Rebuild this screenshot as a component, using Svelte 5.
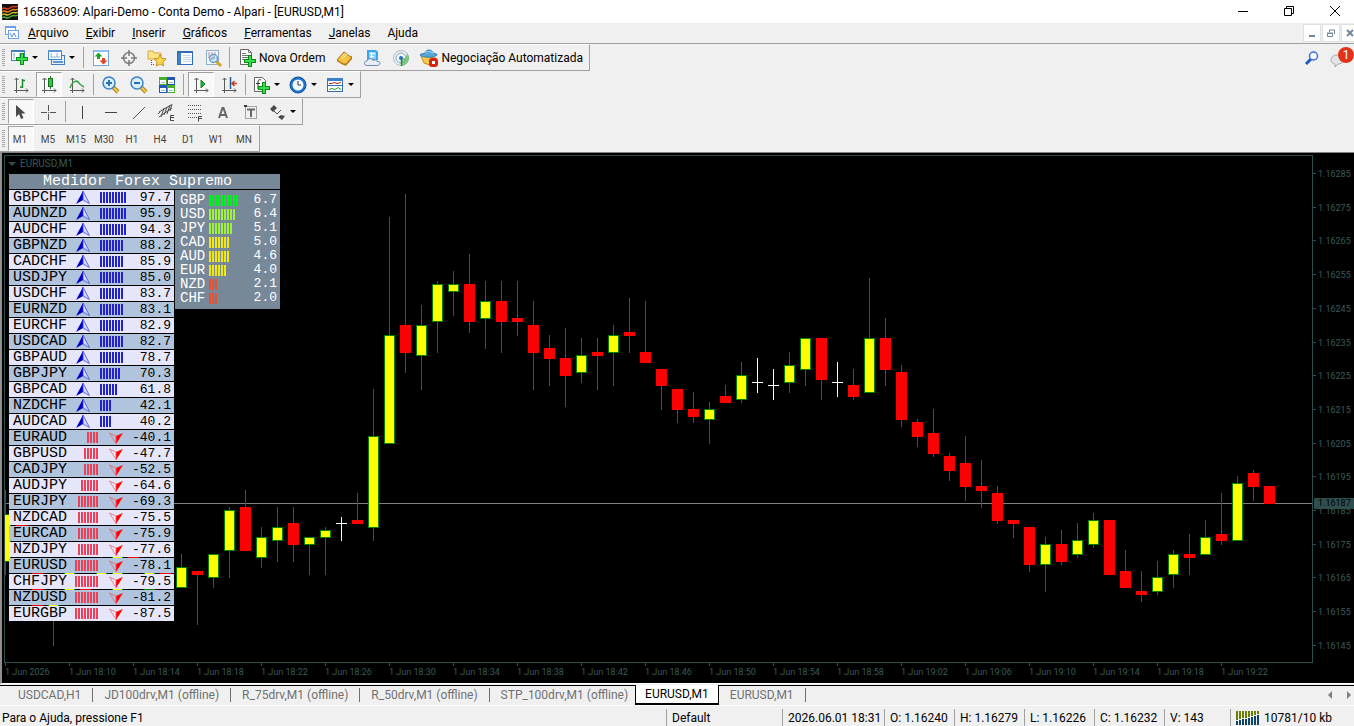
<script lang="ts">
  type Candle = [string, number, number, number, number];
  type Tool = { icon: string; title: string; text?: string; menu?: boolean; active?: boolean };

  const menus = ['Arquivo', 'Exibir', 'Inserir', 'Gráficos', 'Ferramentas', 'Janelas', 'Ajuda'];

  // null is a separator
  const standard: Array<Tool | null> = [
    { icon: 'newchart', title: 'Novo gráfico', menu: true },
    { icon: 'profiles', title: 'Perfis', menu: true },
    null,
    { icon: 'market', title: 'Observação do mercado' },
    { icon: 'target', title: 'Janela de dados' },
    { icon: 'navigator', title: 'Navegador' },
    { icon: 'terminal', title: 'Terminal' },
    { icon: 'tester', title: 'Testador' },
    null,
    { icon: 'order', title: 'Nova ordem', text: 'Nova Ordem' },
    { icon: 'book', title: 'MetaEditor' },
    { icon: 'cloud', title: 'Hospedagem virtual' },
    { icon: 'signal', title: 'Sinais' },
    { icon: 'auto', title: 'Negociação', text: 'Negociação Automatizada' }
  ];
  const charts: Array<Tool | null> = [
    { icon: 'bars', title: 'Barras' },
    { icon: 'candles', title: 'Candles', active: true },
    { icon: 'line', title: 'Linha' },
    null,
    { icon: 'zoomin', title: 'Ampliar' },
    { icon: 'zoomout', title: 'Reduzir' },
    { icon: 'tile', title: 'Lado a lado' },
    null,
    { icon: 'scroll', title: 'Rolagem automática', active: true },
    { icon: 'shift', title: 'Deslocar gráfico' },
    null,
    { icon: 'indicators', title: 'Indicadores', menu: true },
    { icon: 'clock', title: 'Períodos', menu: true },
    { icon: 'template', title: 'Modelos', menu: true }
  ];
  const lines: Array<Tool | null> = [
    { icon: 'cursor', title: 'Cursor', active: true },
    { icon: 'cross', title: 'Mira' },
    null,
    { icon: 'vline', title: 'Linha vertical' },
    { icon: 'hline', title: 'Linha horizontal' },
    { icon: 'trend', title: 'Linha de tendência' },
    { icon: 'channel', title: 'Canal equidistante' },
    { icon: 'fibo', title: 'Retração de Fibonacci' },
    { icon: 'text', title: 'Texto' },
    { icon: 'label', title: 'Etiqueta' },
    { icon: 'arrows', title: 'Setas', menu: true }
  ];
  const toolbars = [standard, charts, lines];
  const periods = ['M1', 'M5', 'M15', 'M30', 'H1', 'H4', 'D1', 'W1', 'MN'];

  // pair, value, number of bars
  const pairs: Array<[string, number, number]> = [
    ['GBPCHF', 97.7, 9], ['AUDNZD', 95.9, 9], ['AUDCHF', 94.3, 9], ['GBPNZD', 88.2, 8],
    ['CADCHF', 85.9, 8], ['USDJPY', 85.0, 8], ['USDCHF', 83.7, 8], ['EURNZD', 83.1, 8],
    ['EURCHF', 82.9, 8], ['USDCAD', 82.7, 8], ['GBPAUD', 78.7, 8], ['GBPJPY', 70.3, 7],
    ['GBPCAD', 61.8, 6], ['NZDCHF', 42.1, 4], ['AUDCAD', 40.2, 4], ['EURAUD', -40.1, 4],
    ['GBPUSD', -47.7, 5], ['CADJPY', -52.5, 5], ['AUDJPY', -64.6, 6], ['EURJPY', -69.3, 7],
    ['NZDCAD', -75.5, 7], ['EURCAD', -75.9, 7], ['NZDJPY', -77.6, 7], ['EURUSD', -78.1, 8],
    ['CHFJPY', -79.5, 8], ['NZDUSD', -81.2, 8], ['EURGBP', -87.5, 8]
  ];
  const strength: Array<[string, string, number, string]> = [
    ['GBP', '6.7', 10, 'lime'], ['USD', '6.4', 9, 'lawn'], ['JPY', '5.1', 8, 'lawn'],
    ['CAD', '5.0', 7, 'gold'], ['AUD', '4.6', 7, 'gold'], ['EUR', '4.0', 6, 'gold'],
    ['NZD', '2.1', 3, 'weak'], ['CHF', '2.0', 3, 'weak']
  ];

  // kind (u = up, d = down, x = doji), high, body top, body bottom, low
  const step = 16;
  const top = 156;
  const candles: Candle[] = [
    ['u', 490, 514, 562, 575], ['d', 515, 520, 540, 545], ['d', 560, 571, 608, 610], ['u', 596, 604, 618, 646],
    ['u', 565, 570, 592, 595], ['d', 583, 586, 592, 596], ['u', 555, 571, 576, 580], ['u', 553, 556, 591, 595],
    ['d', 540, 554, 560, 562], ['u', 560, 571, 590, 594], ['d', 552, 571, 576, 580],
    ['u', 554, 567, 588, 588], ['d', 571, 571, 575, 625], ['u', 554, 554, 578, 588], ['u', 507, 510, 551, 578],
    ['d', 490, 507, 551, 551], ['u', 527, 537, 558, 568], ['u', 507, 527, 541, 562], ['d', 507, 523, 545, 562],
    ['u', 537, 537, 545, 575], ['u', 527, 530, 538, 575], ['x', 517, 523, 524, 541], ['d', 493, 520, 524, 524],
    ['u', 389, 436, 528, 541], ['u', 217, 335, 444, 444], ['d', 194, 325, 353, 373], ['u', 305, 325, 356, 390],
    ['u', 281, 284, 322, 353], ['u', 271, 284, 292, 316], ['d', 254, 284, 322, 333], ['u', 281, 301, 319, 349],
    ['d', 281, 301, 322, 353], ['d', 281, 318, 322, 336], ['d', 301, 325, 353, 390], ['d', 335, 348, 359, 386],
    ['d', 328, 358, 376, 407], ['u', 338, 355, 373, 383], ['d', 338, 352, 356, 390], ['u', 325, 335, 353, 386],
    ['d', 298, 332, 336, 353], ['d', 301, 352, 363, 363], ['d', 369, 369, 386, 410], ['d', 389, 389, 410, 423],
    ['d', 392, 409, 417, 423], ['u', 402, 409, 420, 444], ['d', 385, 396, 403, 403], ['u', 362, 375, 400, 403],
    ['x', 358, 382, 383, 393], ['x', 369, 385, 386, 400], ['u', 352, 365, 383, 393], ['u', 338, 338, 370, 386],
    ['d', 338, 338, 380, 400], ['x', 362, 382, 383, 397], ['d', 369, 385, 397, 400], ['u', 278, 338, 393, 393],
    ['d', 318, 338, 370, 386], ['d', 365, 372, 420, 427], ['d', 419, 422, 437, 447], ['d', 409, 433, 454, 457],
    ['d', 453, 456, 471, 481], ['d', 436, 463, 487, 501], ['d', 460, 486, 491, 508], ['d', 486, 493, 521, 524],
    ['d', 520, 520, 524, 538], ['d', 527, 527, 565, 572], ['u', 537, 544, 565, 592], ['d', 530, 544, 562, 565],
    ['u', 523, 540, 555, 558], ['u', 513, 520, 545, 548], ['d', 520, 520, 575, 575], ['d', 550, 571, 588, 588],
    ['d', 571, 591, 595, 602], ['u', 561, 577, 592, 595], ['u', 550, 554, 575, 588], ['d', 534, 554, 558, 575],
    ['u', 520, 537, 555, 555], ['d', 493, 534, 541, 545], ['u', 476, 483, 541, 541], ['d', 470, 473, 487, 501],
    ['d', 486, 486, 504, 504]
  ];

  const prices = Array.from({ length: 15 }, (_, i) => (1.16285 - i * 0.0001).toFixed(5));
  const times = Array.from({ length: 20 }, (_, i) => {
    if (i === 0) return '1 Jun 2026';
    const m = 6 + i * 4;
    return `1 Jun ${18 + Math.floor(m / 60)}:${String(m % 60).padStart(2, '0')}`;
  });

  const tabs = [
    'USDCAD,H1', 'JD100drv,M1 (offline)', 'R_75drv,M1 (offline)', 'R_50drv,M1 (offline)',
    'STP_100drv,M1 (offline)', 'EURUSD,M1', 'EURUSD,M1'
  ];
  let activeTab = $state(5);
  let activePeriod = $state('M1');
</script>

{#snippet plus(x: number, y: number)}
  <path transform="translate({x} {y})" d="M4 0h4v4h4v4H8v4H4V8H0V4h4z" fill="#0a8a16" />
  <path transform="translate({x} {y})" d="M5 1h2v4h4v2H7v4H5V7H1V5h4z" fill="#35e04a" />
{/snippet}

{#snippet axes()}
  <path d="M5.500 3v15M3.500 5l2-2 2 2M3 15.500h14M15 13.500l2 2-2 2" fill="none" stroke="#5a5a5a" />
{/snippet}

{#snippet icon(name: string)}
  <svg class="icon" width="20" height="20" viewBox="0 0 20 20" aria-hidden="true">
    {#if name === 'newchart'}
      <rect x="2.5" y="2.5" width="13" height="10" fill="#fff" stroke="#3f7fc4" />
      <path d="M2 3h14" stroke="#3f7fc4" stroke-width="2" />
      <path d="M5 5v6M4 6h2M11 5v5M10 7h4" stroke="#8ab0d8" />
      {@render plus(7, 5)}
    {:else if name === 'profiles'}
      <rect x="5.5" y="7.5" width="13" height="9" fill="#e8f2fc" stroke="#3f7fc4" />
      <rect x="2.5" y="2.5" width="13" height="9" fill="#fff" stroke="#3f7fc4" />
      <path d="M2 3h14M7 14h10" stroke="#5b95d2" stroke-width="2" />
      <path d="M5 5v5M5 9h9M11 5v4" stroke="#8ab0d8" />
    {:else if name === 'market'}
      <rect x="2.5" y="2.5" width="15" height="15" fill="#fff" stroke="#6ea6e0" />
      <path d="M3 3h14" stroke="#8cc0f4" stroke-width="2" />
      <path d="M7.500 4.500l4 4H9v2.500H6V8.500H3.500z" fill="#1fa32b" />
      <path d="M12.500 16.500l-4-4H11V10h3v2.500h2.500z" fill="#e8431f" />
    {:else if name === 'target'}
      <circle cx="10" cy="10" r="5.500" fill="none" stroke="#808080" stroke-width="1.500" />
      <path d="M10 2v6M10 12v6M2 10h6M12 10h6" stroke="#777" stroke-width="1.500" />
    {:else if name === 'navigator'}
      <path d="M1 3h5l1 2h7v6H1z" fill="#fbe48a" stroke="#d8a93c" />
      <path d="M4.500 12v5M4 16.500h4" stroke="#555" stroke-dasharray="1 1" />
      <path d="M13 6.500l1.800 3.900 4.200.5-3.100 2.900.8 4.200-3.700-2.100-3.700 2.100.8-4.200L7 10.900l4.200-.5z" fill="#ffd84d" stroke="#c98f1c" />
    {:else if name === 'terminal'}
      <rect x="2.500" y="3.500" width="15" height="13" fill="#fff" stroke="#2f6cb4" />
      <path d="M3 4h14" stroke="#2f6cb4" stroke-width="2" />
      <rect x="3" y="5" width="3" height="11" fill="#3f82cc" />
      <path d="M8 7.500h8M8 9.500h8M8 11.500h8M8 13.500h8" stroke="#c2d6ec" />
    {:else if name === 'tester'}
      <rect x="3.500" y="2.500" width="12" height="14" fill="#f4f9ff" stroke="#93aec9" />
      <path d="M6 4v6M9 4v3M12 4v3" stroke="#b88" />
      <path d="M13.500 13.500L18 18" stroke="#d9a520" stroke-width="3" />
      <circle cx="10.500" cy="10.500" r="4" fill="#cfe6fa" stroke="#6e9cc9" stroke-width="1.500" />
      <path d="M9 9v3M11 8v3" stroke="#6e8cae" />
    {:else if name === 'order'}
      <path d="M3.500 1.500h8l3 3v12h-11z" fill="#fff" stroke="#666" />
      <path d="M11.500 1.500v3h3M5 5.500h4M5 7.500h7M5 9.500h6M5 11.500h4" fill="none" stroke="#777" />
      {@render plus(7, 7)}
    {:else if name === 'book'}
      <path d="M2 12l7-8c2 1 4 4 8 5l-6 8c-3 0-6-3-9-5z" fill="#f5c443" stroke="#a86c10" />
      <path d="M2 12c3 1 6 4 9 3.500l6-6.500v2l-6 6.500c-3 0-6-3-9-4z" fill="#b77a16" />
      <path d="M6 9l4-4M7 11l5-5" stroke="#ffe9a6" />
    {:else if name === 'cloud'}
      <path d="M4 2h9l2 2v8H4z" fill="#3aa6f0" />
      <path d="M6 4h7v7H6z" fill="#8ad2fb" />
      <path d="M7 5.500h5M7 8.500h4M8.500 4v6" stroke="#fff" />
      <path d="M4 17.500c-3.500 0-3.500-4.500 0-4.500 1-3 5-3 6-.5 2-1.500 4-.5 4 1 4-.5 4 4 0 4z" fill="#e8eef8" stroke="#6d87b3" />
    {:else if name === 'signal'}
      <circle cx="10" cy="10" r="7.500" fill="#edf3f6" stroke="#a9bfce" />
      <circle cx="10" cy="10" r="5" fill="none" stroke="#86a5bd" />
      <path d="M10 10l1 8c4-1 7-4 7-8 0-2-1-4-2-5 0 4-2 6-6 5z" fill="#62bb62" opacity=".75" />
      <path d="M10.500 11v7" stroke="#2f8f38" stroke-width="1.500" />
      <circle cx="10" cy="10" r="2" fill="#2b6fae" />
    {:else if name === 'auto'}
      <path d="M2 8l3 7 8 3 4-8z" fill="#f4cb45" stroke="#bf8f1c" />
      <path d="M1 7c1-2 4-1 5-2 1-4 7-4 8 0 1 1 4 0 4 2-4 3-13 3-17 0z" fill="#58a6dc" stroke="#3480b8" />
      <path d="M6 5c2-2 5-2 8 0" fill="none" stroke="#a8dcf8" />
      <rect x="10" y="10" width="9" height="9" rx="3" fill="#d82414" />
      <rect x="13" y="13" width="3" height="3" fill="#fff" />
    {:else if name === 'bars'}
      {@render axes()}
      <path d="M11.500 4v9M9 12h2M12 5.500h2" stroke="#1c8c2c" stroke-width="1.500" />
    {:else if name === 'candles'}
      {@render axes()}
      <path d="M11.500 1v13" stroke="#14731f" />
      <rect x="9.500" y="3.500" width="4" height="8" fill="#2fc747" stroke="#14731f" />
    {:else if name === 'line'}
      {@render axes()}
      <path d="M3 13c3-8 7-8 9-5 1 2 3 3 5 4" fill="none" stroke="#32a542" stroke-width="1.500" />
    {:else if name === 'zoomin' || name === 'zoomout'}
      <path d="M12 12l5 5" stroke="#a87f14" stroke-width="4" />
      <path d="M12 12l5 5" stroke="#f1cd51" stroke-width="2" />
      <circle cx="8" cy="8" r="6" fill="#d7efff" stroke="#3b82c9" stroke-width="1.500" />
      <path d="M5 8h6" stroke="#2b6fb0" stroke-width="2" />
      {#if name === 'zoomin'}<path d="M8 5v6" stroke="#2b6fb0" stroke-width="2" />{/if}
    {:else if name === 'tile'}
      <rect x="2" y="2" width="8" height="8" fill="#4caf2c" />
      <rect x="10" y="2" width="8" height="8" fill="#2456b8" />
      <rect x="2" y="10" width="8" height="8" fill="#2456b8" />
      <rect x="10" y="10" width="8" height="8" fill="#4caf2c" />
      <path d="M3 5h6v4H3zM11 5h6v4h-6zM3 13h6v4H3zM11 13h6v4h-6z" fill="#fff" />
      <path d="M4 7.500h4M12 7.500h4M4 15.500h4M12 15.500h4" stroke="#9cc0dc" />
    {:else if name === 'scroll'}
      {@render axes()}
      <path d="M10 5l4 4-4 4z" fill="#27b53c" stroke="#15852a" />
    {:else if name === 'shift'}
      {@render axes()}
      <path d="M11.500 2v12" stroke="#1c5f96" stroke-width="1.500" />
      <path d="M18 8.500h-5M15.500 6L13 8.500l2.500 2.500" fill="none" stroke="#c63c1a" stroke-width="1.500" />
    {:else if name === 'indicators'}
      <path d="M3.500 2.500h8l3 3v11h-11z" fill="#fff" stroke="#666" />
      <path d="M10 5c-2-1-3 0-3 2v7M5 8.500h4" fill="none" stroke="#333" />
      {@render plus(7, 7)}
    {:else if name === 'clock'}
      <circle cx="10" cy="10" r="8" fill="#1e74d0" stroke="#14508f" />
      <circle cx="10" cy="10" r="5.500" fill="#f2f8ff" />
      <path d="M10 6v4h3" fill="none" stroke="#333" />
    {:else if name === 'template'}
      <rect x="2.500" y="3.500" width="15" height="13" fill="#fff" stroke="#2f6cb4" />
      <path d="M2 4.500h16" stroke="#3b7fcb" stroke-width="3" />
      <path d="M3 10.500h14" stroke="#2f6cb4" />
      <path d="M4 8.500h3l2-1 3 1 4-1" fill="none" stroke="#a82b1c" />
      <path d="M4 14.500l3-1 3 1 3-2 3 2" fill="none" stroke="#2c9a3b" />
    {:else if name === 'cursor'}
      <path d="M5 3v12l3-3 2 5 2.500-1-2-4.500h4z" fill="#4a4a4a" />
    {:else if name === 'cross'}
      <path d="M9.500 3v6M9.500 12v6M2 10.500h6M11 10.500h6M9 10.500h1" stroke="#555" />
    {:else if name === 'vline'}
      <path d="M9.500 4v13" stroke="#444" />
    {:else if name === 'hline'}
      <path d="M4 10.500h12" stroke="#444" />
    {:else if name === 'trend'}
      <path d="M4 17L16 5" stroke="#555" />
    {:else if name === 'channel'}
      <path d="M2 10L14 3M2 15L15 6M4 15l3-9M7 13l3-8M10 12l3-9M13 9l2-7M1 12l2-2" stroke="#4a4a4a" />
      <path d="M17 13.500h-3.500v5H17M14 15.500h3" fill="none" stroke="#444" />
    {:else if name === 'fibo'}
      <path d="M3 3.500h14M3 7.500h14M3 11.500h14M3 15.500h9" stroke="#555" stroke-dasharray="1 1" />
      <path d="M17 14.500h-3.500v5M14 16.500h3" fill="none" stroke="#444" />
    {:else if name === 'text'}
      <path d="M6 16L9.500 6h1L14 16M7.500 13h5" fill="none" stroke="#666" stroke-width="2" />
    {:else if name === 'label'}
      <rect x="4.500" y="4.500" width="11" height="12" fill="none" stroke="#555" stroke-dasharray="1 1" />
      <path d="M6 7.500h8M10 7v8" stroke="#666" stroke-width="2" />
      <rect x="3" y="3" width="3" height="2" fill="#333" />
    {:else if name === 'arrows'}
      <path d="M3 7l4-4 3 3-4 4zM11 15l3-2 4 1-3 4z" fill="#4a4a4a" />
      <path d="M7 9l3 3 4-4" fill="none" stroke="#4a4a4a" />
    {/if}
  </svg>
{/snippet}

<div class="terminal">
  <header class="titlebar">
    <svg width="16" height="16" viewBox="0 0 16 16" aria-hidden="true">
      <rect width="16" height="16" fill="#111" />
      <path d="M0 5c3-3 4 2 8-1s5 0 8-2" fill="none" stroke="#e23a1c" stroke-width="1.500" />
      <path d="M0 8c3-3 4 2 8-1s5 0 8-2" fill="none" stroke="#f0801e" stroke-width="1.500" />
      <path d="M0 11c3-3 4 2 8-1s5 0 8-2" fill="none" stroke="#c4c42a" stroke-width="1.500" />
      <path d="M0 14c3-3 4 2 8-1s5 0 8-2" fill="none" stroke="#4fb02c" stroke-width="1.500" />
    </svg>
    <h1>16583609: Alpari-Demo - Conta Demo - Alpari - [EURUSD,M1]</h1>
    <div class="window-buttons">
      <button aria-label="Minimizar"><svg width="12" height="12"><path d="M1 6.500h10" stroke="#000" /></svg></button>
      <button aria-label="Restaurar"><svg width="12" height="12"><path d="M1.500 3.500h7v7h-7zM3.500 3V1.500h7v7H9" fill="none" stroke="#000" /></svg></button>
      <button aria-label="Fechar"><svg width="12" height="12"><path d="M1 1l10 10M11 1L1 11" stroke="#000" /></svg></button>
    </div>
  </header>

  <nav class="menubar">
    <svg width="16" height="16" viewBox="0 0 16 16" aria-hidden="true">
      <rect x="1.500" y="1.500" width="10" height="8" fill="#fff" stroke="#6ea0e8" />
      <path d="M1 2h11" stroke="#6ea0e8" stroke-width="2" />
      <rect x="4.500" y="5.500" width="10" height="8" fill="#fff" stroke="#6ea0e8" />
      <path d="M6 8l2 4 2-4 2 4" fill="none" stroke="#5890e0" />
    </svg>
    {#each menus as menu, i}
      <button class="menu">{#if i < 6}<u>{menu[0]}</u>{menu.slice(1)}{:else}{menu}{/if}</button>
    {/each}
    <div class="mdi-buttons">
      <button aria-label="Minimizar gráfico"><svg width="10" height="10"><path d="M2 8h6" stroke="#73879a" stroke-width="2" /></svg></button>
      <button aria-label="Restaurar gráfico"><svg width="10" height="10"><path d="M1.500 5.500h5v3h-5zM1 5h6M3 2h6M8.500 2v4M3.500 2v2" fill="none" stroke="#73879a" /></svg></button>
      <button aria-label="Fechar gráfico"><svg width="10" height="10"><path d="M2 2l6 6M8 2L2 8" stroke="#73879a" stroke-width="2" /></svg></button>
    </div>
  </nav>

  {#each toolbars as tools, row}
    <div class="toolbar-row">
      <div class="toolbar">
        <span class="grip"></span>
        {#each tools as tool}
          {#if tool === null}
            <span class="separator"></span>
          {:else}
            <button class="tool" class:active={tool.active} class:drop={tool.menu} class:labelled={tool.text} title={tool.title}>
              {@render icon(tool.icon)}
              {#if tool.text}<span>{tool.text}</span>{/if}
              {#if tool.menu}<i class="caret"></i>{/if}
            </button>
          {/if}
        {/each}
      </div>
      {#if row === 0}
        <div class="right-tools">
          <button aria-label="Procurar">
            <svg width="16" height="16" viewBox="0 0 16 16">
              <path d="M2 14l5-5" stroke="#2458c8" stroke-width="3" />
              <circle cx="9.500" cy="6" r="4" fill="#f4f9ff" stroke="#3a70dc" stroke-width="1.500" />
            </svg>
          </button>
          <button class="chat" aria-label="Mensagens">
            <svg width="16" height="16" viewBox="0 0 16 16">
              <path d="M7 2c8 0 8 9 1 9l-3 3v-3c-6-1-5-9 2-9z" fill="#e2e4ea" stroke="#a8a8ae" />
            </svg>
            <span class="badge">1</span>
          </button>
        </div>
      {/if}
    </div>
  {/each}

  <div class="toolbar-row">
    <div class="toolbar">
      <span class="grip"></span>
      {#each periods as period}
        <button class="tool period" class:active={period === activePeriod} onclick={() => (activePeriod = period)}>{period}</button>
      {/each}
    </div>
  </div>

  <main class="chart">
    <div class="plot">
      <svg class="series" role="img" aria-label="Gráfico de candles EURUSD,M1">
        <rect x="0" y={503 - top} width="100%" height="1" fill="#808080" />
        {#each candles as [kind, high, open, close, low], i}
          <g class={kind}>
            <rect class="wick" x={i * step} y={high - top} width="1" height={low - high} />
            <rect class="edge" x={i * step - 5} y={open - top} width="11" height={close - open} />
            {#if kind === 'u'}
              <rect class="fill" x={i * step - 4} y={open - top + 1} width="9" height={close - open - 2} />
            {/if}
          </g>
        {/each}
      </svg>
      <div class="symbol"><i></i>EURUSD,M1</div>

      <section class="meter">
        <h2>Medidor Forex Supremo</h2>
        <div class="meter-body">
          <ul class="pairs">
            {#each pairs as [name, value, bars]}
              <li>
                <span class="name">{name}</span>
                <span class="gauge" class:down={value < 0}>
                  <svg width="14" height="13" viewBox="0 0 14 13">
                    {#if value > 0}
                      <path d="M7 0v9L0 13z" fill="#0000c8" />
                      <path d="M7 0v9l6.500 3.500z" fill="#c8d8ff" stroke="#3c3ccc" stroke-width=".7" />
                    {:else}
                      <path d="M7 5v8l7-11z" fill="#f00" />
                      <path d="M7 5v7.500L.5 2z" fill="none" stroke="#ee5566" stroke-width=".7" />
                    {/if}
                  </svg>
                  <span class="bars" style="width: {bars * 3 - 1}px"></span>
                </span>
                <span class="value">{value.toFixed(1)}</span>
              </li>
            {/each}
          </ul>
          <ul class="strength">
            {#each strength as [name, value, bars, tone]}
              <li>
                <span class="name">{name}</span>
                <span class="bars {tone}" style="width: {bars * 3 - 1}px"></span>
                <span class="value">{value}</span>
              </li>
            {/each}
          </ul>
        </div>
      </section>
    </div>

    <div class="prices">
      {#each prices as price}<span>{price}</span>{/each}
      <b class="last">1.16187</b>
    </div>
    <div class="times">
      {#each times as time}<span>{time}</span>{/each}
    </div>
  </main>

  <div class="tabs">
    {#each tabs as tab, i}
      <button class="tab" class:active={i === activeTab} class:before={i === activeTab - 1} onclick={() => (activeTab = i)}>{tab}</button>
    {/each}
    <span class="pager"><i class="prev"></i><i class="next"></i></span>
  </div>

  <footer class="status">
    <span class="help">Para o Ajuda, pressione F1</span>
    <span class="profile">Default</span>
    <span class="date">2026.06.01 18:31</span>
    <span class="quote">O: 1.16240</span>
    <span class="quote">H: 1.16279</span>
    <span class="quote">L: 1.16226</span>
    <span class="quote">C: 1.16232</span>
    <span class="volume">V: 143</span>
    <span class="traffic">
      <svg width="24" height="14" viewBox="0 0 24 14" aria-hidden="true">
        {#each [9, 8, 7, 7, 6, 5, 4, 3] as h, i}
          <rect x={i * 3} y="0" width="2" height={h} fill="#6b8000" />
          <rect x={i * 3} y={h + 1} width="2" height={13 - h} fill="#0f4468" />
        {/each}
      </svg>
      10781/10 kb
    </span>
  </footer>
</div>

<style>
  :global(body) {
    margin: 0;
    overflow: hidden;
  }

  .terminal {
    display: flex;
    flex-direction: column;
    height: 100vh;
    background: #f0f0f0;
    color: #000;
    font: 12px/16px Roboto, 'Open Sans', sans-serif;
  }

  button {
    padding: 0;
    border: 0;
    background: none;
    color: inherit;
    font: inherit;
    white-space: nowrap;
  }

  .titlebar {
    display: flex;
    flex: none;
    align-items: center;
    height: 23px;
    padding-left: 2px;
    background: #fff;
    overflow: hidden;
  }

  .titlebar h1 {
    margin: 0 0 0 5px;
    font: inherit;
    white-space: nowrap;
  }

  .window-buttons {
    display: flex;
    margin: 0 -4px 2px auto;
  }

  .window-buttons button {
    width: 46px;
    height: 20px;
  }

  .window-buttons svg {
    display: block;
    margin: 0 auto;
  }

  .menubar {
    display: flex;
    flex: none;
    align-items: center;
    height: 20px;
    padding-left: 4px;
    border-bottom: 1px solid #a0a0a0;
    overflow: hidden;
  }

  .menu {
    padding: 0 8px 0 9px;
  }

  .menu:first-of-type {
    padding-left: 8px;
  }

  .mdi-buttons {
    display: flex;
    gap: 1px;
    margin: 0 -5px 0 auto;
  }

  .mdi-buttons button {
    width: 18px;
    height: 18px;
    border: 1px solid #e0e0e0;
    background: #fff;
  }

  .mdi-buttons svg {
    display: block;
    margin: 0 auto;
  }

  .toolbar-row {
    display: flex;
    flex: none;
    height: 27px;
  }

  .toolbar {
    display: flex;
    box-sizing: border-box;
    height: 27px;
    border-top: 1px solid #fff;
    border-right: 1px solid #a0a0a0;
    border-bottom: 1px solid #a0a0a0;
  }

  .grip {
    width: 3px;
    margin: 4px 2px;
    background: repeating-linear-gradient(#a8a8a8 0 1px, #f0f0f0 1px 2px);
  }

  .separator {
    width: 1px;
    margin: 2px 3px 2px 2px;
    background: #a0a0a0;
  }

  .tool {
    display: flex;
    box-sizing: border-box;
    align-items: center;
    justify-content: center;
    width: 28px;
    height: 25px;
  }

  .tool.active {
    width: 26px;
    margin: 0 1px;
    border: 1px solid #fff;
    border-top-color: #a0a0a0;
    border-left-color: #a0a0a0;
    background: #f8f8f8;
  }

  .tool.drop {
    justify-content: flex-start;
    gap: 3px;
    width: 37px;
    padding-left: 2px;
  }

  .tool.labelled {
    width: auto;
    padding: 0 6px 0 4px;
    gap: 2px;
  }

  .tool.period {
    padding: 2px 2px 0 0;
    color: #444;
    font-size: 10px;
  }

  .icon {
    flex: none;
  }

  .caret {
    border: 3px solid transparent;
    border-top-color: #000;
    border-bottom: 0;
  }

  .right-tools {
    display: flex;
    align-items: center;
    gap: 10px;
    margin-left: auto;
  }

  .right-tools svg {
    display: block;
  }

  .chat {
    position: relative;
    width: 24px;
    padding-top: 6px;
  }

  .badge {
    position: absolute;
    top: 0;
    right: 0;
    width: 16px;
    height: 16px;
    border-radius: 8px;
    background: #e2331a;
    color: #fff;
    text-align: center;
  }

  .chart {
    display: grid;
    flex: 1;
    grid-template: minmax(0, 1fr) 20px / minmax(0, 1fr) 41px;
    min-height: 0;
    padding: 2px 0 0 2px;
    border-top: 1px solid #808080;
    border-left: 2px solid #909090;
    border-bottom: 1px solid #fff;
    background: #000;
    color: #385c5c;
    font: 9px/12px Roboto, 'Noto Sans', sans-serif;
    overflow: hidden;
  }

  .plot {
    position: relative;
    border: 1px solid #2f4f4f;
  }

  .series {
    display: block;
    width: 100%;
    height: 100%;
    shape-rendering: crispEdges;
  }

  .u .wick,
  .u .edge {
    fill: #008000;
  }

  .u .fill {
    fill: #ff0;
  }

  .d .wick,
  .d .edge {
    fill: #f00;
  }

  .x .wick,
  .x .edge {
    fill: #fff;
  }

  .symbol {
    position: absolute;
    top: 2px;
    left: 3px;
    display: flex;
    align-items: center;
    gap: 4px;
    font-size: 10px;
  }

  .symbol i {
    border: 4px solid transparent;
    border-top-color: #2f4f4f;
    border-bottom: 0;
  }

  .meter {
    position: absolute;
    top: 18px;
    left: 4px;
    width: 271px;
    font-family: 'Courier New', 'Liberation Mono', monospace;
  }

  .meter h2 {
    margin: 0 0 1px;
    padding-right: 14px;
    background: #778899;
    color: #fff;
    font: 15px/15px 'Courier New', 'Liberation Mono', monospace;
    text-align: center;
  }

  .meter-body {
    display: flex;
    align-items: flex-start;
    gap: 1px;
  }

  .meter ul {
    margin: 0;
    padding: 0;
    list-style: none;
  }

  .meter li {
    display: flex;
    align-items: center;
  }

  .name {
    flex: none;
    font-size: 15px;
  }

  .value {
    margin-left: auto;
    font-size: 13px;
  }

  .pairs {
    width: 165px;
    color: #000;
  }

  .pairs li {
    box-sizing: border-box;
    height: 15px;
    margin-bottom: 1px;
    padding: 0 3px 0 4px;
    background: #e6e6fa;
    line-height: 15px;
  }

  .pairs li:nth-child(even) {
    background: #b0c4de;
  }

  .gauge {
    display: flex;
    align-items: center;
    gap: 10px;
    margin-left: 9px;
  }

  .gauge svg {
    flex: none;
  }

  .gauge.down {
    flex-direction: row-reverse;
    gap: 11px;
    width: 56px;
    margin-left: 0;
    justify-content: flex-start;
  }

  .bars {
    flex: none;
    height: 11px;
    background: repeating-linear-gradient(90deg, #2222d0 0 2px, transparent 2px 3px);
  }

  .down .bars {
    background: repeating-linear-gradient(90deg, #f04058 0 2px, transparent 2px 3px);
  }

  .strength {
    flex: 1;
    background: #778899;
    color: #fff;
  }

  .meter .strength {
    padding: 3px 3px 4px 5px;
  }

  .strength li {
    height: 14px;
    line-height: 14px;
  }

  .strength .name {
    width: 29px;
    font-size: 14px;
  }

  .bars.lime {
    background: repeating-linear-gradient(90deg, #00f020 0 2px, transparent 2px 3px);
  }

  .bars.lawn {
    background: repeating-linear-gradient(90deg, #a0f040 0 2px, transparent 2px 3px);
  }

  .bars.gold {
    background: repeating-linear-gradient(90deg, #f0e810 0 2px, transparent 2px 3px);
  }

  .bars.weak {
    background: repeating-linear-gradient(90deg, #e85030 0 2px, transparent 2px 3px);
  }

  .prices {
    position: relative;
    display: flex;
    flex-direction: column;
    justify-content: space-between;
    padding: 13px 0 11px;
  }

  .prices span::before {
    display: inline-block;
    width: 3px;
    height: 1px;
    margin-right: 2px;
    background: #2f4f4f;
    content: '';
    vertical-align: 3px;
  }

  .last {
    position: absolute;
    top: 343px;
    right: 0;
    left: 1px;
    padding-left: 4px;
    background: #2f4f4f;
    color: #000;
    font-weight: normal;
    line-height: 11px;
  }

  .times {
    display: flex;
    grid-column: 1 / -1;
    padding-left: 1px;
    overflow: hidden;
  }

  .times span {
    flex: 0 0 64px;
    white-space: nowrap;
  }

  .times span::before {
    display: block;
    width: 1px;
    height: 3px;
    background: #2f4f4f;
    content: '';
  }

  .tabs {
    display: flex;
    flex: none;
    height: 19px;
    margin-top: 1px;
    padding-left: 7px;
    border-top: 1px solid #000;
    border-bottom: 1px solid #fff;
    color: #707070;
  }

  .tab {
    position: relative;
    padding: 0 12px 2px 11px;
  }

  .tab::after {
    position: absolute;
    top: 2px;
    right: 0;
    width: 1px;
    height: 14px;
    background: #707070;
    content: '';
  }

  .tab.before {
    padding-right: 7px;
  }

  .tab.before::after,
  .tab.active::after {
    content: none;
  }

  .tab.active {
    height: 20px;
    margin-top: -1px;
    padding: 0 9px;
    border: 1px solid #000;
    border-width: 0 1px 2px;
    background: #fff;
    color: #000;
  }

  .pager {
    display: flex;
    align-items: center;
    gap: 15px;
    margin: 0 3px 2px auto;
  }

  .prev,
  .next {
    border-top: 4px solid transparent;
    border-bottom: 4px solid transparent;
  }

  .prev {
    border-right: 4px solid #808080;
  }

  .next {
    border-left: 4px solid #808080;
  }

  .status {
    display: flex;
    flex: none;
    box-sizing: border-box;
    height: 20px;
    padding: 3px 0 0 2px;
    line-height: 18px;
    overflow: hidden;
  }

  .status span {
    flex: none;
    box-sizing: border-box;
    padding-left: 5px;
    border-left: 1px solid #a0a0a0;
    white-space: nowrap;
  }

  .status .help {
    flex: 1;
    padding: 0;
    border: 0;
  }

  .profile {
    width: 116px;
  }

  .date {
    width: 102px;
  }

  .quote {
    width: 70px;
  }

  .volume {
    width: 66px;
  }

  .status .traffic {
    display: flex;
    align-items: center;
    gap: 4px;
    width: 124px;
  }
</style>
